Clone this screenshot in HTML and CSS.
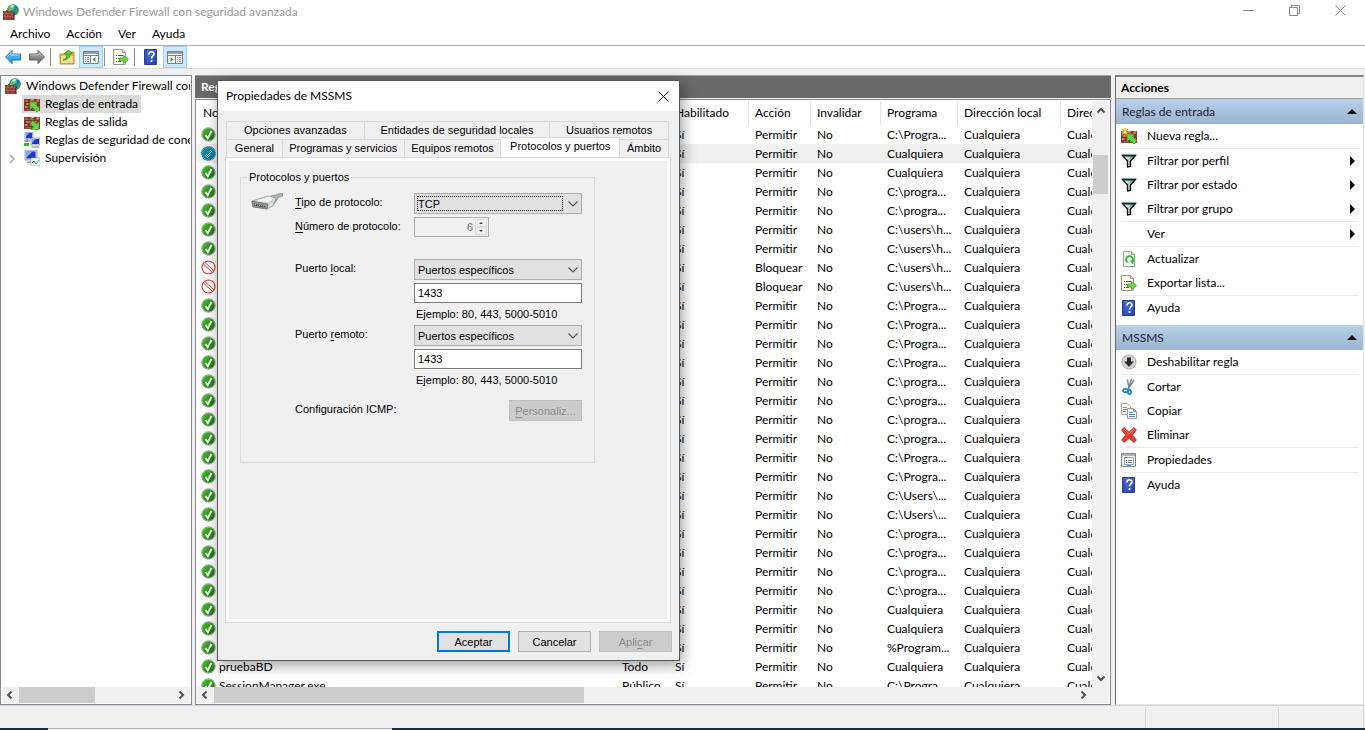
FILE: index.html
```html
<!DOCTYPE html>
<html lang="es">
<head>
<meta charset="utf-8">
<title>Windows Defender Firewall con seguridad avanzada</title>
<link rel="stylesheet" href="styles.css">
</head>
<body>
<svg class="sprite" aria-hidden="true">
  <defs>
    <linearGradient id="g-green" x1="0" y1="0" x2="1" y2="1"><stop offset="0" stop-color="#45d322"/><stop offset=".5" stop-color="#25990f"/><stop offset="1" stop-color="#1b6d10"/></linearGradient>
    <linearGradient id="g-blue" x1="0" y1="0" x2="0" y2="1"><stop offset="0" stop-color="#7fd4fb"/><stop offset="1" stop-color="#1189d8"/></linearGradient>
    <linearGradient id="g-gray" x1="0" y1="0" x2="0" y2="1"><stop offset="0" stop-color="#aaa"/><stop offset="1" stop-color="#6e6e6e"/></linearGradient>
    <linearGradient id="g-help" x1="0" y1="0" x2="1" y2="1"><stop offset="0" stop-color="#5878d8"/><stop offset="1" stop-color="#2440a8"/></linearGradient>
    <linearGradient id="g-funnel" x1="0" y1="0" x2="1" y2="0"><stop offset="0" stop-color="#fff"/><stop offset=".5" stop-color="#b8c8c8"/><stop offset="1" stop-color="#088"/></linearGradient>
    <pattern id="p-dots" width="2" height="2" patternUnits="userSpaceOnUse"><rect width="1" height="1" fill="#0078d7"/><rect x="1" y="1" width="1" height="1" fill="#0078d7"/></pattern>
  </defs>
  <symbol id="i-bricks" viewBox="0 0 16 16">
    <path d="M0 3h16v12H0z" fill="#8c4133"/>
    <path d="M1 4h3v2H1zM6 4h4v2H6zM12 4h3v2h-3zM3 7h4v2H3zM9 7h4v2H9zM1 10h3v2H1zM6 10h4v2H6zM12 10h3v2h-3zM3 13h4v1H3zM9 13h4v1H9z" fill="#b4604c"/>
    <path d="M0 6.500h16M0 9.500h16M0 12.500h16M5 3v3M11 3v3M2 6.500v3M8 6.500v3M14 6.500v3M5 9.500v3M11 9.500v3M8 12.500v2.500" stroke="#6b3229" stroke-width=".8" fill="none"/>
    <path d="M7 4l3-1M2 8h2M10 10h3M13 4h2M1 11h2" stroke="#d9a499" fill="none"/>
  </symbol>
  <symbol id="i-firewall" viewBox="0 0 16 16">
    <circle cx="10" cy="6" r="5.800" fill="#1976c9"/>
    <path d="M6 3c2-3 6-3 7-2l-2 2 1 2-3 1-2 2-2-1z" fill="#63c741"/><path d="M12 6l3-2 .5 3-2 4-2-2z" fill="#38a52c"/>
    <path d="M7 2l3-1 1 1-2 2z" fill="#c8f0fc"/>
    <path d="M0 7h3V6h2v1h4v2h2v7H0z" fill="#8c3b2f"/>
    <path d="M0 9.500h11M0 12.500h11M3 7v2M7 7v2M5 10v2M9 10v2M2 10v2M3 13v3M7 13v3" stroke="#b87468" stroke-width=".6" fill="none"/>
    <path d="M11 8v8" stroke="#4c1d18"/>
  </symbol>
  <symbol id="i-in" viewBox="0 0 16 16"><use href="#i-bricks"/><path d="M6 6h8l-2.500 2.500L16 13l-3 3-4.500-4.500L6 14z" fill="#62d83d" stroke="#2b8c1c" stroke-width=".6"/></symbol>
  <symbol id="i-out" viewBox="0 0 16 16"><use href="#i-bricks"/><path d="M15 15.500H7l2.500-2.500L6 9.500l3-3 3.500 3.500L15 7.500z" fill="#62d83d" stroke="#2b8c1c" stroke-width=".6"/></symbol>
  <symbol id="i-new" viewBox="0 0 16 16"><use href="#i-in"/><path d="M4 0v8M0 4h8M1 1l6 6M7 1L1 7" stroke="#f09a18" stroke-width="1.200"/><circle cx="4" cy="4" r="1.500" fill="#fff3a0"/></symbol>
  <symbol id="i-net" viewBox="0 0 16 16">
    <path d="M1 0h8v7H1z" fill="#c9d4e4" stroke="#68788f" stroke-width=".6"/><path d="M2 1h6v5H2z" fill="#1a35d0"/><path d="M2 1h3L2 5z" fill="#77a1fa"/>
    <path d="M0 9h6M3 7v3" stroke="#667" /><path d="M0 11h5v3H0z" fill="#36b52a"/>
    <path d="M7 6h9v7H7z" fill="#d9e0ea" stroke="#68788f" stroke-width=".6"/><path d="M8 7h7v5H8z" fill="#1a35d0"/><path d="M8 7h4l-4 4z" fill="#77a1fa"/><path d="M8 14h7l1 2H7z" fill="#b6bdc8"/>
  </symbol>
  <symbol id="i-monitor" viewBox="0 0 16 16">
    <path d="M1 0h12v10H1z" fill="#d2d9e4" stroke="#68788f" stroke-width=".6"/><path d="M2.500 1.500h9v7h-9z" fill="#1a35d0"/><path d="M2.500 1.500h6l-6 6z" fill="#85abf8"/>
    <path d="M4 11h6l2 2H2z" fill="#aeb7c4"/><path d="M7 8h9v8H7z" fill="#f7fbff" stroke="#8da2b8" stroke-width=".7"/><path d="M8 13l2-2 2 3 3-4" fill="none" stroke="#29a329"/>
  </symbol>
  <symbol id="i-back" viewBox="0 0 16 16"><path d="M.5 8L7 1.500v3.500h8.500v6H7v3.500z" fill="url(#g-blue)" stroke="#1b6cab" stroke-width=".9"/><path d="M2.500 7.500L6 4v2h8" fill="none" stroke="#c6f1ff" stroke-width=".8"/></symbol>
  <symbol id="i-forward" viewBox="0 0 16 16"><path d="M15.500 8L9 1.500v3.500H.5v6H9v3.500z" fill="url(#g-gray)" stroke="#505050" stroke-width=".9"/><path d="M1.500 6H10V4l3.500 3.500" fill="none" stroke="#ccc" stroke-width=".8"/></symbol>
  <symbol id="i-up" viewBox="0 0 16 16"><path d="M1 5h5l1-2h8v12H1z" fill="#e8bd50" stroke="#a57f28" stroke-width=".8"/><path d="M2 7h12v7H2z" fill="#f8dc8a"/><path d="M4 11c3-1 4-3 4-6H5.500L9.500 1l4 4H11c0 4-3 6-7 6z" fill="#58cc32" stroke="#218319" stroke-width=".7"/></symbol>
  <symbol id="i-pane-l" viewBox="0 0 16 16"><path d="M.5 2.500h15v12H.5z" fill="#fff" stroke="#7b8088"/><path d="M1 3h14v2H1z" fill="#9aa0a8"/><path d="M.5 6.500h15M7.500 7v7" stroke="#7b8088"/><path d="M2 8.500h1M4 8.500h2M2 10.500h1M4 10.500h2M2 12.500h1M4 12.500h2" stroke="#4c88c0"/><path d="M12.500 8v5L9.500 10.500z" fill="#2ba81f"/></symbol>
  <symbol id="i-pane-r" viewBox="0 0 16 16"><path d="M.5 2.500h15v12H.5z" fill="#fff" stroke="#7b8088"/><path d="M1 3h14v2H1z" fill="#9aa0a8"/><path d="M.5 6.500h15M8.500 7v7" stroke="#7b8088"/><path d="M10 8.500h1M12 8.500h2M10 10.500h1M12 10.500h2M10 12.500h1M12 12.500h2" stroke="#4c88c0"/><path d="M3.500 8v5l3-2.500z" fill="#2ba81f"/></symbol>
  <symbol id="i-export" viewBox="0 0 16 16"><path d="M.5.5h9l3 3v12H.5z" fill="#fdfae6" stroke="#9b9881"/><path d="M9.500.5v3h3" fill="#e5e0c2" stroke="#9b9881"/><path d="M3 6.500h1M5 6.500h5M3 9.500h1M5 9.500h3M3 12.500h1M5 12.500h3" stroke="#42566d"/><path d="M6.500 9h4V6.500l5 4-5 4V12h-4z" fill="#6adb48" stroke="#36a528" stroke-width=".8"/></symbol>
  <symbol id="i-help" viewBox="0 0 16 16"><path d="M1.500.5h12v15h-12z" fill="url(#g-help)" stroke="#253f91"/><path d="M3 1v14" stroke="#243fa6"/><path d="M6 5.500c0-3.500 5-3.500 5-.5 0 2-2.500 2-2.500 4.500" fill="none" stroke="#fff" stroke-width="1.600"/><path d="M7.700 11h1.700v2H7.700z" fill="#fff"/></symbol>
  <symbol id="i-funnel" viewBox="0 0 16 16"><path d="M1.500 2.500h13l-5 5.500v5.500l-3 .500v-6z" fill="url(#g-funnel)" stroke="#000" stroke-width="1.300"/><path d="M1 2.500h14" stroke="#012f33" stroke-width="1.500"/></symbol>
  <symbol id="i-refresh" viewBox="0 0 16 16"><path d="M2.500.5h8l3 3v12h-11z" fill="#f6fbf6" stroke="#92a292"/><path d="M10.500.5v3h3" fill="#d8ddd8" stroke="#92a292"/><path d="M6.500 11.500a3.500 3.500 0 1 1 4 0" fill="none" stroke="#2cb82f" stroke-width="1.800"/><path d="M8.500 9.500h4v4z" fill="#2cb82f"/></symbol>
  <symbol id="i-disable" viewBox="0 0 16 16"><circle cx="8" cy="8" r="7" fill="#d5d5d5" stroke="#aaa"/><path d="M6 3.500h4v4h3L8 13 3 7.500h3z" fill="#2c2c2c"/></symbol>
  <symbol id="i-cut" viewBox="0 0 16 16"><path d="M6.500.5L8 10M13 1L7 10M10.500 0L7.500 9" stroke="#71889b" stroke-width="1.400"/><ellipse cx="4.500" cy="11.500" rx="2.500" ry="1.700" fill="none" stroke="#1680d0" stroke-width="1.700"/><ellipse cx="8.500" cy="13" rx="1.700" ry="2.200" fill="none" stroke="#1680d0" stroke-width="1.700"/></symbol>
  <symbol id="i-copy" viewBox="0 0 16 16"><path d="M.5.5h6l3 3v8h-9z" fill="#f7f9fb" stroke="#a7a9ab"/><path d="M2 4.500h4M2 6.500h4M2 8.500h3" stroke="#6695c5"/><path d="M6.500 5.500h6l3 3v7h-9z" fill="#fff" stroke="#9a9c9f"/><path d="M12.500 5.500v3h3" fill="none" stroke="#9a9c9f"/><path d="M8 9.500h4M8 11.500h6M8 13.500h6" stroke="#4f83bb"/></symbol>
  <symbol id="i-delete" viewBox="0 0 16 16"><path d="M3 .5L8 5 13 .5 15.500 3 11.500 8l4 5-2.500 2.500L8 11.500l-5 4L.5 13l4-5-4-5z" fill="#e83b32" stroke="#a9201b" stroke-width=".6"/><path d="M3 2l5 5 5-5" fill="none" stroke="#f88b82"/></symbol>
  <symbol id="i-props" viewBox="0 0 16 16"><path d="M.5 1.500h14v13H.5z" fill="#f1f3f5" stroke="#82878c"/><path d="M1 2h13v2H1z" fill="#b1b6bb"/><path d="M3.500 5.500h9v7h-9z" fill="#fff" stroke="#a0a8af"/><path d="M3.500 5.500h4M5 8.500h1M7 8.500h4M5 10.500h1M7 10.500h4" stroke="#5c89ad"/><path d="M6 13.500h4" stroke="#29a9e8"/></symbol>
  <symbol id="i-allow" viewBox="0 0 16 16"><circle cx="7.500" cy="7.500" r="6.600" fill="url(#g-green)" stroke="#9aa69a" stroke-width="1.200"/><path d="M4.500 8l2.300 3.200L10.500 4" fill="none" stroke="#fff" stroke-width="2"/></symbol>
  <symbol id="i-allow-sel" viewBox="0 0 16 16"><use href="#i-allow"/><circle cx="7.500" cy="7.500" r="7.300" fill="#0078d7" opacity=".3"/><circle cx="7.500" cy="7.500" r="7.300" fill="url(#p-dots)"/></symbol>
  <symbol id="i-block" viewBox="0 0 16 16"><circle cx="7.500" cy="7.500" r="6.500" fill="#fff" stroke="#df3b32" stroke-width="1.200"/><path d="M2.500 4l9 8.500M4 2.500l9 8.500" stroke="#df3b32" stroke-width="1"/></symbol>
  <symbol id="i-plug" viewBox="0 0 32 20"><path d="M16 6c4-5 9-3 11-5l5-1v3c-3 1-5 1-6 4l-3 4z" fill="#a9b3b8" stroke="#77838a" stroke-width=".6"/><path d="M1 8l16-5 8 2-3 8-6 3-14-3z" fill="#d5dadc" stroke="#879196" stroke-width=".7"/><path d="M1 8l16 3-1 5-14-2z" fill="#8d9699" stroke="#5d666a" stroke-width=".7"/><path d="M3 10.500l11 2.500-.5 1.500-10-2z" fill="#40423a"/><path d="M4 11.500l9.500 2" stroke="#e1d78e" stroke-dasharray="1 1"/><path d="M5 8l12-4 6 1-6 4z" fill="#f1f4f5"/></symbol>
  <symbol id="i-chev-down" viewBox="0 0 10 6"><path d="M.5.5L5 5 9.500.5" fill="none" stroke="#555" stroke-width="1.200"/></symbol>
  <symbol id="i-arrow" viewBox="0 0 8 8"><path d="M5.500 .5L2 4l3.500 3.500" fill="none" stroke="#505050" stroke-width="2"/></symbol>
</svg>

<div class="window">
  <header class="titlebar">
    <svg class="icon"><use href="#i-firewall"/></svg>
    <h1 class="titlebar__text">Windows Defender Firewall con seguridad avanzada</h1>
    <div class="captions">
      <button class="caption" aria-label="Minimizar"><svg viewBox="0 0 11 11"><path d="M0 5.500h11"/></svg></button>
      <button class="caption" aria-label="Restaurar"><svg viewBox="0 0 11 11"><path d="M.5 2.500h8v8h-8zM2.500 2.500v-2h8v8h-2"/></svg></button>
      <button class="caption" aria-label="Cerrar"><svg viewBox="0 0 11 11"><path d="M.5.5l10 10M10.500.5l-10 10"/></svg></button>
    </div>
  </header>
  <nav class="menubar">
    <button>Archivo</button><button>Acción</button><button>Ver</button><button>Ayuda</button>
  </nav>
  <div class="toolbar">
    <button class="tool" aria-label="Atrás"><svg class="icon"><use href="#i-back"/></svg></button>
    <button class="tool" aria-label="Adelante"><svg class="icon"><use href="#i-forward"/></svg></button>
    <span class="tool-sep"></span>
    <button class="tool" aria-label="Subir un nivel"><svg class="icon"><use href="#i-up"/></svg></button>
    <button class="tool tool--on" aria-label="Árbol de consola"><svg class="icon"><use href="#i-pane-l"/></svg></button>
    <span class="tool-sep"></span>
    <button class="tool" aria-label="Exportar lista"><svg class="icon"><use href="#i-export"/></svg></button>
    <span class="tool-sep"></span>
    <button class="tool" aria-label="Ayuda"><svg class="icon"><use href="#i-help"/></svg></button>
    <button class="tool tool--on" aria-label="Panel de acciones"><svg class="icon"><use href="#i-pane-r"/></svg></button>
  </div>

  <main class="panes">
    <section class="pane tree">
      <ul class="tree__list">
        <li class="node node--root"><svg class="icon"><use href="#i-firewall"/></svg><span>Windows Defender Firewall con seguridad avanzada</span></li>
        <li class="node node--selected"><svg class="icon"><use href="#i-in"/></svg><span>Reglas de entrada</span></li>
        <li class="node"><svg class="icon"><use href="#i-out"/></svg><span>Reglas de salida</span></li>
        <li class="node"><svg class="icon"><use href="#i-net"/></svg><span>Reglas de seguridad de conexión</span></li>
        <li class="node node--parent"><svg class="node__twisty" viewBox="0 0 6 10"><path d="M1 1l4 4-4 4"/></svg><svg class="icon"><use href="#i-monitor"/></svg><span>Supervisión</span></li>
      </ul>
      <div class="hscroll">
        <svg class="arrow"><use href="#i-arrow"/></svg><div class="hscroll__track"><div class="thumb thumb--tree"></div></div><svg class="arrow arrow--right"><use href="#i-arrow"/></svg>
      </div>
    </section>

    <section class="center">
      <h2 class="center__title">Reglas de entrada</h2>
      <div class="pane list">
        <div class="list__view">
          <div class="list__rows">
            <table class="rules">
              <colgroup><col class="c-name"><col class="c-profile"><col class="c-enabled"><col class="c-action"><col class="c-override"><col class="c-program"><col class="c-local"><col class="c-remote"></colgroup>
              <thead><tr><th>Nombre</th><th>Perfil</th><th>Habilitado</th><th>Acción</th><th>Invalidar</th><th>Programa</th><th>Dirección local</th><th>Dirección remota</th></tr></thead>
              <tbody id="rules"></tbody>
            </table>
          </div>
          <div class="vscroll">
            <svg class="arrow arrow--up"><use href="#i-arrow"/></svg><div class="vscroll__track"><div class="thumb thumb--rows"></div></div><svg class="arrow arrow--down"><use href="#i-arrow"/></svg>
          </div>
        </div>
        <div class="hscroll hscroll--list">
          <svg class="arrow"><use href="#i-arrow"/></svg><div class="hscroll__track"><div class="thumb thumb--list"></div></div><svg class="arrow arrow--right"><use href="#i-arrow"/></svg>
        </div>
      </div>
    </section>

    <aside class="actions">
      <h2 class="actions__title">Acciones</h2>
      <h3 class="group">Reglas de entrada<svg viewBox="0 0 10 5"><path d="M5 0l5 5H0z"/></svg></h3>
      <div class="group__items">
        <button class="action"><svg class="icon"><use href="#i-new"/></svg><span>Nueva regla...</span></button>
        <hr>
        <button class="action action--sub"><svg class="icon"><use href="#i-funnel"/></svg><span>Filtrar por perfil</span></button>
        <button class="action action--sub"><svg class="icon"><use href="#i-funnel"/></svg><span>Filtrar por estado</span></button>
        <button class="action action--sub"><svg class="icon"><use href="#i-funnel"/></svg><span>Filtrar por grupo</span></button>
        <hr>
        <button class="action action--sub"><svg class="icon"></svg><span>Ver</span></button>
        <hr>
        <button class="action"><svg class="icon"><use href="#i-refresh"/></svg><span>Actualizar</span></button>
        <button class="action"><svg class="icon"><use href="#i-export"/></svg><span>Exportar lista...</span></button>
        <hr>
        <button class="action"><svg class="icon"><use href="#i-help"/></svg><span>Ayuda</span></button>
      </div>
      <h3 class="group">MSSMS<svg viewBox="0 0 10 5"><path d="M5 0l5 5H0z"/></svg></h3>
      <div class="group__items">
        <button class="action"><svg class="icon"><use href="#i-disable"/></svg><span>Deshabilitar regla</span></button>
        <hr>
        <button class="action"><svg class="icon"><use href="#i-cut"/></svg><span>Cortar</span></button>
        <button class="action"><svg class="icon"><use href="#i-copy"/></svg><span>Copiar</span></button>
        <button class="action"><svg class="icon"><use href="#i-delete"/></svg><span>Eliminar</span></button>
        <hr>
        <button class="action"><svg class="icon"><use href="#i-props"/></svg><span>Propiedades</span></button>
        <hr>
        <button class="action"><svg class="icon"><use href="#i-help"/></svg><span>Ayuda</span></button>
      </div>
    </aside>
  </main>

  <footer class="statusbar"><span class="statusbar__main"></span><span class="statusbar__mid"></span><span class="statusbar__end"></span></footer>
  <div class="taskbar"><span class="taskbar__start"></span><span class="taskbar__search"></span></div>
</div>

<div class="dialog" role="dialog" aria-labelledby="dialog-title">
  <header class="dialog__head">
    <h2 id="dialog-title">Propiedades de MSSMS</h2>
    <button class="dialog__close" aria-label="Cerrar"><svg viewBox="0 0 11 11"><path d="M.5.5l10 10M10.500.5l-10 10"/></svg></button>
  </header>
  <div class="dialog__body">
    <div class="tabs tabs--back">
      <button class="tab">Opciones avanzadas</button><button class="tab">Entidades de seguridad locales</button><button class="tab">Usuarios remotos</button>
    </div>
    <div class="tabs tabs--front">
      <button class="tab">General</button><button class="tab">Programas y servicios</button><button class="tab">Equipos remotos</button><button class="tab tab--active">Protocolos y puertos</button><button class="tab">Ámbito</button>
    </div>
    <div class="sheet">
      <fieldset class="ports">
        <legend>Protocolos y puertos</legend>
        <svg class="ports__icon"><use href="#i-plug"/></svg>
        <label for="protocol"><u>T</u>ipo de protocolo:</label>
        <div class="combo combo--focus"><select id="protocol"><option>TCP</option></select><svg class="combo__chev"><use href="#i-chev-down"/></svg></div>
        <label for="number"><u>N</u>úmero de protocolo:</label>
        <div class="spin"><input id="number" value="6" disabled><span class="spin__arrows"><svg viewBox="0 0 6 3"><path d="M3 0l3 3H0z"/></svg><svg viewBox="0 0 6 3"><path d="M3 3l3-3H0z"/></svg></span></div>
        <label class="gap-lg" for="local">Puerto <u>l</u>ocal:</label>
        <div class="combo gap-lg"><select id="local"><option>Puertos específicos</option></select><svg class="combo__chev"><use href="#i-chev-down"/></svg></div>
        <input class="field" value="1433" aria-label="Puertos locales">
        <p class="example">Ejemplo: 80, 443, 5000-5010</p>
        <label for="remote">Puerto <u>r</u>emoto:</label>
        <div class="combo"><select id="remote"><option>Puertos específicos</option></select><svg class="combo__chev"><use href="#i-chev-down"/></svg></div>
        <input class="field" value="1433" aria-label="Puertos remotos">
        <p class="example">Ejemplo: 80, 443, 5000-5010</p>
        <span class="gap-md" id="icmp">Configuración ICMP:</span>
        <button class="btn btn--end gap-md" disabled aria-describedby="icmp"><span><u>P</u>ersonaliz...</span></button>
      </fieldset>
    </div>
    <div class="dialog__buttons">
      <button class="btn btn--default">Aceptar</button>
      <button class="btn">Cancelar</button>
      <button class="btn" disabled><span>Apli<u>c</u>ar</span></button>
    </div>
  </div>
</div>
<script src="rules.js"></script>
</body>
</html>
```
FILE: styles.css
```css
* { box-sizing: border-box; }
body {
  margin: 0;
  height: 100vh;
  overflow: hidden;
  background: #f0f0f0;
  color: #000;
  font: 12px/16px "Segoe UI", Lato, sans-serif;
}
h1, h2, h3, p, ul { margin: 0; padding: 0; font: inherit; }
ul { list-style: none; }
button { margin: 0; padding: 0; border: 0; background: none; color: inherit; font: inherit; }
u { text-underline-offset: 2px; }
.sprite { position: absolute; width: 0; height: 0; }
.icon { flex: none; width: 16px; height: 16px; }

.window { display: flex; flex-direction: column; height: 100vh; }

.titlebar { display: flex; align-items: center; height: 23px; flex: none; padding: 0 2px 0 3px; gap: 4px; background: #fff; color: #999; }
.titlebar__text { flex: 1; }
.captions { display: flex; align-self: flex-start; }
.caption { display: flex; align-items: center; justify-content: center; width: 46px; height: 20px; }
.caption svg { width: 11px; height: 11px; fill: none; stroke: #888; }

.menubar { display: flex; flex: none; gap: 16px; height: 23px; padding: 3px 10px; background: #fff; border-bottom: 1px solid #a8acb3; }
.toolbar { display: flex; align-items: center; flex: none; height: 23px; padding-left: 1px; background: #fff; border-bottom: 1px solid #dcdcdc; }
.tool { display: flex; align-items: center; justify-content: center; width: 24px; height: 22px; }
.tool--on { background: #cce8ff; border: 1px solid #99d1ff; }
.tool-sep { width: 1px; height: 18px; margin: 0 4px 0 1px; background: #8d8d8d; }

.panes { display: grid; grid-template: minmax(0, 1fr) / 192px minmax(0, 1fr) 251px; column-gap: 3px; flex: 1; min-height: 0; padding-top: 6px; }
.pane { border: 1px solid #828790; background: #fff; }

.tree { display: flex; flex-direction: column; min-width: 0; padding: 1px; }
.tree__list { flex: 1; overflow: hidden; }
.node { display: flex; align-items: center; gap: 5px; width: max-content; height: 18px; margin-left: 20px; padding: 0 3px 0 2px; white-space: nowrap; }
.node--root { margin-left: 1px; }
.node--selected { background: #d9d9d9; }
.node--parent { margin-left: 5px; gap: 5px; }
.node__twisty { width: 6px; height: 10px; margin: 2px 4px 0 0; fill: none; stroke: #a6a6a6; stroke-width: 1.500; }

.hscroll { display: flex; align-items: center; flex: none; height: 16px; background: #f0f0f0; }
.hscroll__track { flex: 1; height: 100%; }
.hscroll--list { padding-right: 17px; }
.vscroll { display: flex; flex-direction: column; align-items: center; width: 17px; background: #f0f0f0; }
.vscroll__track { flex: 1; width: 100%; }
.arrow { flex: none; width: 8px; height: 8px; margin: 0 5px 0 4px; }
.arrow--right { transform: rotate(180deg); }
.arrow--up { transform: rotate(90deg); margin: 6px 0; }
.arrow--down { transform: rotate(-90deg); margin: 5px 0; }
.thumb { height: 100%; background: #cdcdcd; }
.thumb--tree { width: 76px; }
.thumb--list { width: 370px; }
.thumb--rows { height: 39px; margin: 34px 1px 0; }

.center { display: flex; flex-direction: column; min-width: 0; border-top: 1px solid #a0a0a0; }
.center__title { height: 22px; flex: none; margin-bottom: 1px; padding: 3px 6px; background: #696969; color: #fff; font-weight: bold; }
.list { display: flex; flex-direction: column; flex: 1; min-height: 0; padding: 1px; }
.list__view { display: flex; flex: 1; min-height: 0; }
.list__rows { flex: 1; min-width: 0; overflow: hidden; }
.rules { width: 1020px; table-layout: fixed; border-collapse: separate; border-spacing: 0; }
.c-name { width: 419px; }
.c-profile { width: 53px; }
.c-enabled { width: 80px; }
.c-action { width: 62px; }
.c-override { width: 70px; }
.c-program { width: 77px; }
.c-local { width: 103px; }
.rules th { height: 24px; padding: 0 0 0 6px; border-right: 1px solid #e5e5e5; font-weight: normal; text-align: left; white-space: nowrap; }
.rules td { height: 19px; padding: 0 0 0 6px; white-space: nowrap; }
.rules td:first-child { padding-left: 4px; }
.rule-name { display: flex; align-items: center; gap: 2px; height: 19px; }
.rule--selected { background: #f0f0f0; }

.actions { display: flex; flex-direction: column; margin: 0 1px; border: 1px solid #e3e3e3; border-left: 1px solid #696969; border-top: 2px solid #828282; background: #fff; }
.actions__title { height: 22px; flex: none; padding: 3px 5px; border-bottom: 1px solid #a0a0a0; background: #f0f0f0; font-weight: bold; }
.group { display: flex; align-items: center; justify-content: space-between; flex: none; height: 25px; padding: 0 6px; background: linear-gradient(#b9d1ea, #99b4d1); color: #1b1b33; }
.group svg { width: 10px; height: 5px; fill: #000; }
.group__items { padding: 0 5px 5px; }
.group__items hr { height: 1px; margin: 0; border: 0; background: #e9e9e9; }
.action { display: flex; align-items: center; gap: 10px; width: 100%; height: 24px; text-align: left; }
.action--sub::after { content: ""; margin: 0 3px 0 auto; border: solid transparent; border-width: 5px 0 5px 5px; border-left-color: #000; }

.statusbar { display: flex; flex: none; height: 23px; border-top: 1px solid #d7d7d7; }
.statusbar span { margin-top: 1px; border-right: 1px solid #d7d7d7; }
.statusbar__main { flex: 1; }
.statusbar__mid { width: 133px; }
.statusbar__end { width: 85px; margin-right: 1px; }
.taskbar { display: flex; flex: none; height: 2px; background: #1b2d3c; }
.taskbar__start { width: 48px; }
.taskbar__search { width: 344px; background: #f0f0f0; border-top: 1px solid #b5b5b5; }

.dialog {
  position: absolute;
  left: 217px;
  top: 80px;
  width: 463px;
  border: 1px solid #565656;
  background: #f0f0f0;
  box-shadow: 2px 4px 14px rgba(0, 0, 0, .4);
  font: 11px/16px "Liberation Sans", Arial, sans-serif;
}
.dialog__head { display: flex; align-items: center; justify-content: space-between; height: 30px; padding: 0 10px 0 8px; background: #fff; font: 12px/16px "Segoe UI", Lato, sans-serif; }
.dialog__close { display: flex; }
.dialog__close svg { width: 11px; height: 11px; fill: none; stroke: #000; }
.dialog__body { padding: 10px 7px 8px; }
.tabs { display: grid; margin: 0 3px 0 1px; border-left: 1px solid #d9d9d9; }
.tabs--back { grid-template-columns: 138fr 186fr 119fr; }
.tabs--front { grid-template-columns: 56fr 122fr 97fr 119fr 49fr; }
.tab { height: 18px; padding-bottom: 2px; border: solid #d9d9d9; border-width: 1px 1px 0 0; white-space: nowrap; }
.tab--active { height: 20px; margin: -2px 0 0; padding-bottom: 3px; background: #fff; }
.sheet { min-height: 466px; margin-right: 1px; padding: 11px 75px 0 14px; border: 1px solid #dcdcdc; outline: 3px solid #fff; outline-offset: -4px; }
.ports {
  display: grid;
  grid-template-columns: 44px 119px 168px;
  row-gap: 3px;
  min-height: 294px;
  margin: 0;
  padding: 8px 0 0 10px;
  border: 1px solid #dcdcdc;
  align-content: start;
}
.ports legend { margin-left: -4px; padding: 0 2px; }
.ports__icon { width: 32px; height: 20px; }
.ports label, .ports > span { grid-column: 2; padding-top: 1px; }
.ports > .combo, .ports > .spin, .ports > .field, .ports > .example, .ports > .btn { grid-column: 3; }
.ports > .gap-lg { margin-top: 19px; }
.ports > .gap-md { margin-top: 9px; }
.combo { position: relative; height: 21px; }
.combo select { appearance: none; width: 100%; height: 21px; padding: 0 3px; border: 1px solid #adadad; border-radius: 0; background: #e1e1e1; color: #000; font: inherit; }
.combo__chev { position: absolute; right: 4px; top: 8px; width: 10px; height: 6px; pointer-events: none; }
.combo--focus::after { content: ""; position: absolute; inset: 3px 19px 3px 3px; border: 1px dotted #000; pointer-events: none; }
.spin { display: flex; width: 75px; height: 20px; padding: 1px; border: 1px solid #adadad; }
.spin input { flex: 1; min-width: 0; padding: 0 2px; border: 0; background: none; color: #6d6d6d; font: inherit; text-align: right; }
.spin__arrows { display: grid; width: 12px; }
.spin__arrows svg { width: 12px; height: 8px; padding: 2px; border: 1px solid #dcdcdc; fill: #444; overflow: visible; }
.field { width: 100%; height: 20px; padding: 0 3px; border: 1px solid #7a7a7a; border-radius: 0; background: #fff; color: #000; font: inherit; }
.example { padding-left: 2px; }
.btn { width: 73px; height: 21px; border: 1px solid #adadad; background: #e1e1e1; }
.btn:disabled { border-color: #bfbfbf; background: #ccc; color: #8a8a8a; }
.btn--default { border: 2px solid #0078d7; }
.btn--end { justify-self: end; }
.dialog__buttons { display: flex; justify-content: flex-end; gap: 8px; margin-top: 8px; }
```
FILE: rules.js
```js
const programs = [
  "C:\\Progra...", "Cualquiera", "Cualquiera", "C:\\progra...", "C:\\progra...",
  "C:\\users\\h...", "C:\\users\\h...", "C:\\users\\h...", "C:\\users\\h...",
  "C:\\Progra...", "C:\\Progra...", "C:\\Progra...", "C:\\Progra...",
  "C:\\progra...", "C:\\progra...", "C:\\progra...", "C:\\progra...",
  "C:\\Progra...", "C:\\Progra...", "C:\\Users\\...", "C:\\Users\\...",
  "C:\\progra...", "C:\\progra...", "C:\\progra...", "C:\\progra...",
  "Cualquiera", "Cualquiera", "%Program...", "Cualquiera", "C:\\Progra..."
];
const selected = 1;
const blocked = new Set([7, 8]);
const names = { 1: ["MSSMS", "Todo"], 28: ["pruebaBD", "Todo"], 29: ["SessionManager.exe", "Público"] };

document.getElementById("rules").innerHTML = programs.map((program, i) => {
  const [name, profile] = names[i] || ["", ""];
  const icon = blocked.has(i) ? "i-block" : i === selected ? "i-allow-sel" : "i-allow";
  return `<tr class="${i === selected ? "rule--selected" : ""}">
    <td><div class="rule-name"><svg class="icon"><use href="#${icon}"/></svg><span>${name}</span></div></td>
    <td>${profile}</td><td>Sí</td><td>${blocked.has(i) ? "Bloquear" : "Permitir"}</td><td>No</td>
    <td>${program}</td><td>Cualquiera</td><td>Cualquiera</td></tr>`;
}).join("");
```
